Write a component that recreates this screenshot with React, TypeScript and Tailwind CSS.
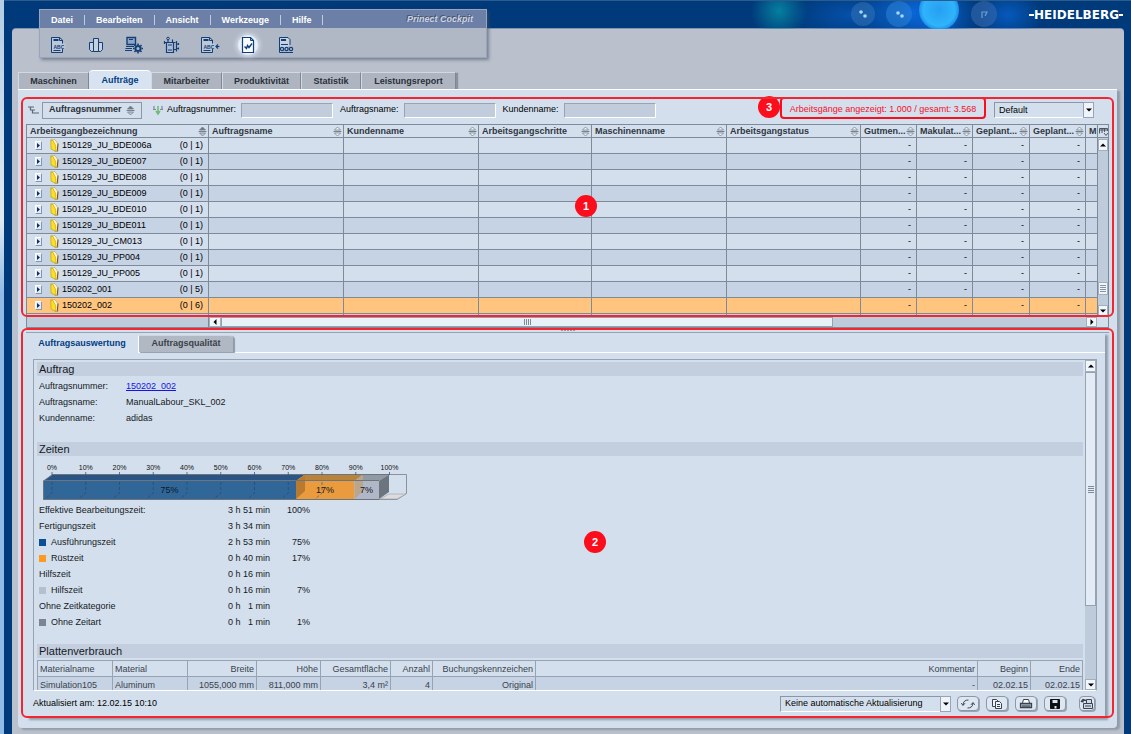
import React from 'react';

type Job = { name: string; count: string; selected?: boolean };

const jobs: Job[] = [
  { name: '150129_JU_BDE006a', count: '(0 | 1)' },
  { name: '150129_JU_BDE007', count: '(0 | 1)' },
  { name: '150129_JU_BDE008', count: '(0 | 1)' },
  { name: '150129_JU_BDE009', count: '(0 | 1)' },
  { name: '150129_JU_BDE010', count: '(0 | 1)' },
  { name: '150129_JU_BDE011', count: '(0 | 1)' },
  { name: '150129_JU_CM013', count: '(0 | 1)' },
  { name: '150129_JU_PP004', count: '(0 | 1)' },
  { name: '150129_JU_PP005', count: '(0 | 1)' },
  { name: '150202_001', count: '(0 | 5)' },
  { name: '150202_002', count: '(0 | 6)', selected: true },
];

const columns = [
  { label: 'Arbeitsgangbezeichnung', width: 'w-[182px]' },
  { label: 'Auftragsname', width: 'w-[135px]' },
  { label: 'Kundenname', width: 'w-[135px]' },
  { label: 'Arbeitsgangschritte', width: 'w-[113px]' },
  { label: 'Maschinenname', width: 'w-[135px]' },
  { label: 'Arbeitsgangstatus', width: '' },
  { label: 'Gutmen...', width: 'w-[56px]' },
  { label: 'Makulat...', width: 'w-[56px]' },
  { label: 'Geplant...', width: 'w-[57px]' },
  { label: 'Geplant...', width: 'w-[56px]' },
  { label: 'M', width: 'w-[12px]' },
];

const times = [
  { label: 'Effektive Bearbeitungszeit:', time: '3 h 51 min', share: '100%', swatch: '' },
  { label: 'Fertigungszeit', time: '3 h 34 min', share: '', swatch: '' },
  { label: 'Ausführungszeit', time: '2 h 53 min', share: '75%', swatch: 'bg-[#0d4f95]' },
  { label: 'Rüstzeit', time: '0 h 40 min', share: '17%', swatch: 'bg-[#ff9a1c]' },
  { label: 'Hilfszeit', time: '0 h 16 min', share: '', swatch: '' },
  { label: 'Hilfszeit', time: '0 h 16 min', share: '7%', swatch: 'bg-[#b6bfcc]' },
  { label: 'Ohne Zeitkategorie', time: '0 h   1 min', share: '', swatch: '' },
  { label: 'Ohne Zeitart', time: '0 h   1 min', share: '1%', swatch: 'bg-[#7c8591]' },
];

const plateColumns = [
  { label: 'Materialname', value: 'Simulation105', width: 'w-[75px]', align: 'text-left' },
  { label: 'Material', value: 'Aluminum', width: 'w-[75px]', align: 'text-left' },
  { label: 'Breite', value: '1055,000 mm', width: 'w-[69px]', align: 'text-right' },
  { label: 'Höhe', value: '811,000 mm', width: 'w-[64px]', align: 'text-right' },
  { label: 'Gesamtfläche', value: '3,4 m²', width: 'w-[70px]', align: 'text-right' },
  { label: 'Anzahl', value: '4', width: 'w-[42px]', align: 'text-right' },
  { label: 'Buchungskennzeichen', value: 'Original', width: 'w-[103px]', align: 'text-right' },
  { label: 'Kommentar', value: '-', width: '', align: 'text-right' },
  { label: 'Beginn', value: '02.02.15', width: 'w-[53px]', align: 'text-right' },
  { label: 'Ende', value: '02.02.15', width: 'w-[52px]', align: 'text-right' },
];

function SortIcon({ active = false }: { active?: boolean }) {
  return (
    <svg className="h-[11px] w-[9px] shrink-0" viewBox="0 0 9 11" fill="none" stroke="#77808d" strokeWidth="0.8">
      <path d="M1.5 4 L4.5 1 L7.5 4 Z" fill={active ? '#6b7481' : '#f2f6fb'} />
      <path d="M0.5 5.5 H8.5" strokeWidth="1" />
      <path d="M1.5 7 L4.5 10 L7.5 7 Z" fill={active ? '#c0c9d5' : '#f2f6fb'} />
    </svg>
  );
}

function Arrow({ dir }: { dir: 'up' | 'down' | 'left' | 'right' }) {
  const d = {
    up: 'M1 5.5 L4 2.5 L7 5.5 Z',
    down: 'M1 2.5 L4 5.5 L7 2.5 Z',
    left: 'M5.5 1 L2.5 4 L5.5 7 Z',
    right: 'M2.5 1 L5.5 4 L2.5 7 Z',
  }[dir];
  return (
    <svg className="h-2 w-2" viewBox="0 0 8 8" fill="#000">
      <path d={d} />
    </svg>
  );
}

function ArrowButton({ dir, className }: { dir: 'up' | 'down' | 'left' | 'right'; className: string }) {
  const name = { up: 'Nach oben', down: 'Nach unten', left: 'Nach links', right: 'Nach rechts' }[dir];
  return (
    <button aria-label={name} className={`flex shrink-0 items-center justify-center border border-[#a3afbf] bg-[#f1f6fb] ${className}`}>
      <Arrow dir={dir} />
    </button>
  );
}

function Badge({ n, className }: { n: number; className: string }) {
  return (
    <span className={`absolute flex size-[22px] items-center justify-center rounded-full bg-[#fb0d1b] text-[11px] font-bold text-white ${className}`}>
      {n}
    </span>
  );
}

/* ---- toolbar drawings, all on a 20 × 18 canvas ---- */
const sheet = (
  <g>
    <path d="M3.5 1.5 H11.5 L14.5 4 V16.5 H3.5 Z" fill="#bcc7d7" />
    <path d="M5.5 4 H10.5" strokeWidth="2" />
    <path d="M11.5 1.5 V4.5 H14.5" />
  </g>
);

const abc = (
  <g>
    <rect x="4.5" y="7.5" width="13" height="5.5" fill="#bcc7d7" stroke="none" />
    <text x="5.5" y="12.5" fontSize="5" fontWeight="700" stroke="none" fill="#123f78">ABC</text>
    <path d="M5.5 14.5 H12.5" />
  </g>
);

const toolIcons: { name: string; lit?: boolean; art: React.ReactNode }[] = [
  { name: 'Auftrag', art: <>{sheet}{abc}</> },
  {
    name: 'Stapel',
    art: (
      <>
        <path d="M3.5 6.5 H7.5 V15.5 H5.5 L3.5 13.5 Z M12.5 6.5 H16.5 V13.5 L14.5 15.5 H12.5 Z" fill="#c7d0de" />
        <path d="M7.5 2.5 H12.5 V15.5 H7.5 Z" fill="#c7d0de" />
      </>
    ),
  },
  {
    name: 'Arbeitsplatz einrichten',
    art: (
      <>
        <path d="M3 1.5 H11.5 V8.5 H3 Z" fill="#8fa6c6" strokeWidth="1.4" />
        <path d="M5 3.5 H9 M2 10.5 H10 M1.5 12.5 H8 M1 14.5 H8" strokeWidth="1.2" />
        <circle cx="14" cy="12.5" r="2.6" strokeWidth="2" />
        <path d="M14 7.5 V9 M14 16 V17.5 M9 12.5 H10.5 M17.5 12.5 H19 M10.5 9 L11.5 10 M16.5 15 L17.5 16 M17.5 9 L16.5 10 M11.5 15 L10.5 16" strokeWidth="1.6" />
      </>
    ),
  },
  {
    name: 'Maschine',
    art: (
      <>
        <circle cx="6" cy="2.5" r="1.3" />
        <path d="M4.5 6.5 H11.5 V16.5 H4.5 Z" fill="#aebdd3" strokeWidth="1.2" />
        <path d="M6 4 V6 M2.5 5 V8 M2.5 6.5 H13.5 M6 9 H10 M6 14 H10 M10.5 3.5 V6 M14.5 5 V15.5 M12 13.5 H14 M15 8 H17 M15 12.5 H17 M16.5 7 V9 M16.5 11.5 V13.5" strokeWidth="1.2" />
      </>
    ),
  },
  {
    name: 'Auftrag laden',
    art: (
      <>
        <g transform="translate(-2 0)">{sheet}{abc}</g>
        <path d="M19.5 10.5 H16 M18 8.5 L16 10.5 L18 12.5" strokeWidth="1.2" />
      </>
    ),
  },
  {
    name: 'Auswertung',
    lit: true,
    art: (
      <>
        <path d="M4.5 1.5 H12.5 L15.5 4.5 V16.5 H4.5 Z" fill="#f8fbff" strokeWidth="1.2" />
        <path d="M12.5 1.5 V4.5 H15.5" />
        <path d="M6.5 10.5 L8.5 12.5 L9.5 9.5 L11 11.5 L14 7.5" strokeWidth="1.4" />
      </>
    ),
  },
  {
    name: 'Einstellungen',
    art: (
      <>
        <path d="M14 9 V3.5 L12 1.5 H3.5 V16.5" fill="#c7d0de" />
        <path d="M5 4 H10" strokeWidth="2" />
        <path d="M5 8.5 H12 M3.5 16.5 H17" />
        <g fill="#c7d0de" strokeWidth="1.3">
          <circle cx="6" cy="13" r="1.6" />
          <circle cx="10.5" cy="13" r="1.6" />
          <circle cx="15" cy="13" r="1.6" />
        </g>
      </>
    ),
  },
];

function HeaderArt() {
  return (
    <svg className="absolute right-0 top-0 h-7 w-[431px]" viewBox="0 0 431 28">
      <defs>
        <radialGradient id="teal"><stop offset="0" stopColor="#067f9f" /><stop offset="1" stopColor="#067f9f" stopOpacity="0" /></radialGradient>
        <radialGradient id="blue"><stop offset="0" stopColor="#0a66d8" /><stop offset="1" stopColor="#0a66d8" stopOpacity="0" /></radialGradient>
        <radialGradient id="orb"><stop offset="0" stopColor="#279ff2" /><stop offset="0.8" stopColor="#2fb4fb" /><stop offset="1" stopColor="#1c8ee8" /></radialGradient>
      </defs>
      <ellipse cx="79" cy="10" rx="28" ry="28" fill="url(#teal)" />
      <ellipse cx="150" cy="14" rx="60" ry="26" fill="url(#blue)" opacity="0.5" />
      <ellipse cx="212" cy="12" rx="52" ry="34" fill="url(#blue)" />
      <ellipse cx="240" cy="14" rx="40" ry="34" fill="url(#blue)" opacity="0.8" />
      <ellipse cx="308" cy="14" rx="34" ry="26" fill="url(#blue)" opacity="0.7" />
      <circle cx="163" cy="13" r="12" fill="#3d7bb8" opacity="0.45" />
      <circle cx="199" cy="13" r="13" fill="#2f86d6" opacity="0.5" />
      <circle cx="239" cy="9" r="20" fill="url(#orb)" />
      <circle cx="284" cy="13" r="13" fill="#3c6cae" opacity="0.55" />
      <g fill="#a9d8f5">
        <circle cx="161" cy="11" r="1.8" /><circle cx="165" cy="15" r="1.8" />
        <circle cx="198" cy="12" r="1.8" /><circle cx="202" cy="15" r="1.8" />
      </g>
      <path d="M282 17 V11 L287 11 L285 15" fill="none" stroke="#7fb0dd" strokeWidth="1.2" opacity="0.8" />
    </svg>
  );
}

function TopMenu() {
  return (
    <div className="relative z-10 -mt-[19px] ml-[27px] w-[448px] border border-[#99a5bd] bg-[#b1b8c5] shadow-[2px_2px_3px_rgba(70,80,100,0.55)]">
      <nav className="flex h-[18px] items-center bg-[#6c7fa7] pt-[2px] text-[9px] font-bold text-white">
        {['Datei', 'Bearbeiten', 'Ansicht', 'Werkzeuge', 'Hilfe'].map((m) => (
          <button key={m} className="flex h-[10px] items-center border-r border-[#c2cbe0] px-[11px] leading-[10px]">{m}</button>
        ))}
        <span className="ml-auto pr-[13px] italic text-[#c9d3e3] [text-shadow:-1px_-1px_0_#4a5568]">Prinect Cockpit</span>
      </nav>
      <div className="flex h-[29px] items-center gap-[18px] pl-2 pt-1">
        {toolIcons.map((t) => (
          <button
            key={t.name}
            aria-label={t.name}
            className={`flex size-5 items-center justify-center ${t.lit ? 'rounded-full bg-[#e6eef8] shadow-[0_0_5px_1px_#dfe8f4]' : ''}`}
          >
            <svg className="h-[18px] w-5" viewBox="0 0 20 18" fill="none" stroke="#123f78" fontFamily="Liberation Sans">{t.art}</svg>
          </button>
        ))}
      </div>
    </div>
  );
}

function MainTabs() {
  const tabs = [
    { label: 'Maschinen', width: 'w-[71px]' },
    { label: 'Aufträge', width: 'w-[62px]', active: true },
    { label: 'Mitarbeiter', width: 'w-[71px]' },
    { label: 'Produktivität', width: 'w-[79px]' },
    { label: 'Statistik', width: 'w-[60px]' },
    { label: 'Leistungsreport', width: 'w-[95px]' },
  ];
  return (
    <div role="tablist" className="mt-3 flex h-[19px] items-end text-[9px] font-bold">
      {tabs.map((t) => (
        <button
          key={t.label}
          role="tab"
          aria-selected={!!t.active}
          className={`${t.width} ${
            t.active
              ? 'h-[19px] rounded-t-sm border-t border-white bg-[#d8e3f1] pt-[2px] text-[#003d82]'
              : 'h-[17px] border-l border-r border-t border-l-[#d3d9e2] border-r-[#7f8794] border-t-[#d3d9e2] bg-[#aeb5c1] pt-px text-[#2b3038] last:shadow-[2px_1px_1px_#8b93a0]'
          }`}
        >
          {t.label}
        </button>
      ))}
    </div>
  );
}

function FilterField({ id, label }: { id: string; label: string }) {
  return (
    <>
      <label htmlFor={id} className="whitespace-nowrap">{label}</label>
      <input id={id} className="ml-[5px] mr-[7px] h-[15px] w-[92px] border border-b-white border-l-[#98a3b3] border-r-white border-t-[#98a3b3] bg-[#c1cddd] px-1" />
    </>
  );
}

function Dropdown({ label, value, width }: { label: string; value: string; width: string }) {
  return (
    <span className={`relative flex h-4 ${width}`}>
      <select aria-label={label} defaultValue={value} className="h-4 w-full appearance-none border border-b-white border-l-[#8b96a6] border-r-white border-t-[#8b96a6] bg-[#d3dfed] pl-1 pr-3 text-[9px] leading-[13px] text-black">
        <option>{value}</option>
      </select>
      <span className="pointer-events-none absolute inset-y-0 right-0 flex w-[11px] items-center justify-center border border-[#98a3b3] bg-[#eef4fa]">
        <Arrow dir="down" />
      </span>
    </span>
  );
}

function FilterBar() {
  return (
    <div className="flex h-[26px] items-center pl-[7px] pr-[20px] text-[9px] text-black">
      <svg className="mr-[3px] h-2 w-[11px]" viewBox="0 0 11 8" fill="none" stroke="#5d6673" strokeWidth="1.2">
        <path d="M0 1 H6 M2.5 1 V4 H7 M4.5 4 V7 H11" />
      </svg>
      <button className="mr-[11px] flex h-[17px] w-[100px] items-center justify-between border border-[#8d97a6] bg-[#d3dfed] pl-[6px] pr-[6px] font-bold text-[#2b3038]">
        Auftragsnummer
        <SortIcon active />
      </button>
      <svg className="mr-1 h-[10px] w-[10px]" viewBox="0 0 10 10" fill="none" strokeWidth="1.2">
        <path d="M1 1 V5 M9 1 V5 M0 4.5 H3 M7 4.5 H10" stroke="#7d8793" />
        <path d="M5 1 V9 M3 6 L5 9 L7 6" stroke="#6fbd7c" strokeWidth="1.6" />
      </svg>
      <FilterField id="f-nummer" label="Auftragsnummer:" />
      <FilterField id="f-name" label="Auftragsname:" />
      <FilterField id="f-kunde" label="Kundenname:" />
      <span className="relative ml-auto mr-2 flex h-[22px] w-[206px] items-center justify-center self-start whitespace-nowrap rounded border-2 border-[#fb0d1b] pt-1 text-[#f3122a]">
        Arbeitsgänge angezeigt: 1.000 / gesamt: 3.568
        <Badge n={3} className="-left-[24px] -top-[3px]" />
      </span>
      <Dropdown label="Ansicht" value="Default" width="w-[100px]" />
    </div>
  );
}

function Folder() {
  return (
    <svg className="ml-2 h-[13px] w-[9px]" viewBox="0 0 9 13">
      <path d="M1 1 L5 0.5 L8 5 V12 L5 12.5 Z" fill="#fdf6c8" stroke="#c09a48" strokeWidth="0.6" />
      <path d="M0.8 0.8 L3 1.6 L5.8 7 V12.5 L1 10 Z" fill="#fbe21f" stroke="#b8901d" strokeWidth="0.6" />
      <path d="M8 4.5 L7.2 12.5" stroke="#6e5230" />
    </svg>
  );
}

function JobTable() {
  return (
    <div className="mx-[5px] mt-px flex h-[193px]">
      <div className="min-w-0 flex-1 overflow-hidden border-l border-[#7f8a99]">
        <table className="w-full table-fixed border-separate border-spacing-0 text-[9px]">
          <thead>
            <tr>
              {columns.map((c, i) => (
                <th key={i} className={`${c.width} h-[14px] overflow-hidden border-b border-r border-t border-[#7f8a99] bg-[#d3dfed] p-0 pl-[3px] text-left font-bold leading-[12px] text-[#30363f]`}>
                  <span className="flex items-center justify-between pr-px">
                    {c.label}
                    {i < 10 && <SortIcon active={i === 0} />}
                  </span>
                </th>
              ))}
            </tr>
          </thead>
          <tbody>
            {jobs.map((j, r) => (
              <tr key={j.name} className={j.selected ? 'bg-[#ffc57f]' : r % 2 ? 'bg-[#c6d3e4]' : 'bg-[#d4dfee]'}>
                <td className="h-4 border-b border-r border-[#7f8a99] p-0">
                  <span className="flex items-center pr-[5px] leading-[15px]">
                    <button aria-label={`${j.name} öffnen`} className="ml-2 flex h-[9px] w-[7px] items-center justify-center border border-b-[#8896a8] border-l-white border-r-[#8896a8] border-t-white bg-[#e3ecf6]">
                      <svg className="h-[5px] w-[3px]" viewBox="0 0 3 5" fill="#0b3263"><path d="M0 0 L3 2.5 L0 5 Z" /></svg>
                    </button>
                    <Folder />
                    <span className="ml-[3px]">{j.name}</span>
                    <span className="ml-auto">{j.count}</span>
                  </span>
                </td>
                {columns.slice(1).map((_, i) => (
                  <td key={i} className="h-4 border-b border-r border-[#7f8a99] p-0 pr-[5px] text-right leading-[15px]">
                    {i >= 5 && i < 9 ? '-' : ''}
                  </td>
                ))}
              </tr>
            ))}
            <tr className="bg-[#c6d3e4]">
              <td className="h-4 border-r border-[#7f8a99] p-0">
                <span className="ml-[15px] flex"><Folder /></span>
              </td>
              {columns.slice(1).map((_, i) => (
                <td key={i} className="border-r border-[#7f8a99] p-0" />
              ))}
            </tr>
          </tbody>
        </table>
      </div>
      <div className="flex w-[11px] flex-col border-r border-[#7f8a99] bg-[#becbdb]">
        <button aria-label="Spalten wählen" className="flex h-[14px] items-center justify-center border-y border-[#7f8a99] bg-[#d3dfed]">
          <svg className="h-[9px] w-[9px]" viewBox="0 0 9 9" fill="none" stroke="#4d5663"><path d="M0.5 6.5 V1.5 H8.5 V4 M0.5 3 H8.5 M3 1.5 V6 M5.5 1.5 V5 M5 6 L7 8.5 L9 6" /></svg>
        </button>
        <ArrowButton dir="up" className="mt-px h-[12px]" />
        <div className="flex-1" />
        <div className="flex h-[13px] flex-col items-center justify-center gap-px border border-[#a3afbf] bg-[#eef4fa]">
          <i className="h-px w-[6px] bg-[#8793a3]" />
          <i className="h-px w-[6px] bg-[#8793a3]" />
          <i className="h-px w-[6px] bg-[#8793a3]" />
          <i className="h-px w-[6px] bg-[#8793a3]" />
        </div>
        <div className="h-[10px]" />
        <ArrowButton dir="down" className="h-[12px]" />
      </div>
    </div>
  );
}

function HorizontalScroll() {
  return (
    <div className="mx-[5px] flex h-[11px] border-x border-b border-[#7f8a99] bg-[#becbdb]">
      <div className="w-[182px] border-r border-[#7f8a99]" />
      <ArrowButton dir="left" className="w-[12px]" />
      <div className="flex w-[612px] items-center justify-center gap-px border border-[#97a2b1] bg-[#e8f0f8]">
        <i className="h-[6px] w-px bg-[#7f8a99]" />
        <i className="h-[6px] w-px bg-[#7f8a99]" />
        <i className="h-[6px] w-px bg-[#7f8a99]" />
        <i className="h-[6px] w-px bg-[#7f8a99]" />
      </div>
      <div className="flex-1" />
      <ArrowButton dir="right" className="w-[11px]" />
      <div className="w-[11px] bg-[#d4dfee]" />
    </div>
  );
}

function SectionTitle({ children, className = '' }: { children: React.ReactNode; className?: string }) {
  return <h2 className={`h-[14px] bg-[#c3cfdf] pl-[2px] text-[11px] leading-[14px] text-[#16191e] ${className}`}>{children}</h2>;
}

function TimeChart() {
  const ticks = [0, 10, 20, 30, 40, 50, 60, 70, 80, 90, 100];
  const step = 33.75;
  return (
    <svg className="block h-[46px] w-[372px]" viewBox="37 456 372 46" fontFamily="Liberation Sans" textAnchor="middle">
      {ticks.map((t, i) => (
        <text key={t} x={52 + i * step} y="469.5" fontSize="7" fill="#111">{t}%</text>
      ))}
      <path d="M43 499.5 H397 L406.5 493.5 V474.5 H52" fill="none" stroke="#8b929c" />
      <path d="M380 499 H397 L406 494 H389 Z" fill="#dcdcdc" stroke="#9aa0a8" strokeWidth="0.6" />
      <path d="M43.5 481 L52.5 474.5 H305 L296 481 Z" fill="#2a5484" />
      <path d="M296 481 L305 474.5 H363 L354.5 481 Z" fill="#b8843c" />
      <path d="M354.5 481 L363 474.5 H389 L379 481 Z" fill="#8f9aa5" />
      <path d="M43.5 481 H296 V499 H43.5 Z" fill="#316698" />
      <path d="M296 481 H354.5 V499 H296 Z" fill="#e99b3d" />
      <path d="M296 481 L305 475 V491 L296 499 Z" fill="#b97a30" />
      <path d="M354.5 481 H379 V499 H354.5 Z" fill="#b1b7c6" />
      <path d="M354.5 481 L363 475 V491 L354.5 499 Z" fill="#b9a68c" />
      <path d="M379 481 L389 474.5 V492 L379 499 Z" fill="#6c747e" />
      <path d="M43.5 480.5 H379 M43.5 481 L52.5 474.5 H389 M43.5 481 V499.5 H379" fill="none" stroke="#6c747e" />
      {ticks.map((t, i) => (
        <g key={t} stroke="#3f5570" strokeWidth="0.8" fill="none">
          <path d={`M${52 + i * step} 472 V475`} />
          {i < 9 && <path d={`M${52 + i * step} 482 V493 L${45 + i * step} 499`} strokeDasharray="3 2" stroke="#1c3c60" opacity="0.6" />}
        </g>
      ))}
      <g fontSize="9" fill="#0c1828">
        <text x="169.5" y="493">75%</text>
        <text x="325" y="493">17%</text>
        <text x="366.5" y="493">7%</text>
      </g>
    </svg>
  );
}

function Details() {
  return (
    <div className="min-w-0 flex-1 overflow-hidden pl-[3px] pr-[2px] pt-[2px]">
      <SectionTitle>Auftrag</SectionTitle>
      <dl className="mt-[2px] grid grid-cols-[87px_1fr] pl-[2px] leading-4">
        <dt>Auftragsnummer:</dt>
        <dd><a href="#150202_002" className="text-[#1414e6] underline">150202_002</a></dd>
        <dt>Auftragsname:</dt>
        <dd>ManualLabour_SKL_002</dd>
        <dt>Kundenname:</dt>
        <dd>adidas</dd>
      </dl>

      <SectionTitle className="mt-4">Zeiten</SectionTitle>
      <TimeChart />
      <table className="ml-[2px] table-fixed border-separate border-spacing-0 leading-4">
        <tbody>
          {times.map((t, i) => (
            <tr key={i}>
              <td className="w-[160px] p-0">
                <span className="flex items-center">
                  {t.swatch && <i className={`mr-[5px] size-[7px] ${t.swatch}`} />}
                  {t.label}
                </span>
              </td>
              <td className="w-[71px] whitespace-pre p-0 text-right">{t.time}</td>
              <td className="w-[40px] p-0 text-right">{t.share}</td>
            </tr>
          ))}
        </tbody>
      </table>

      <SectionTitle className="mt-[14px]">Plattenverbrauch</SectionTitle>
      <table className="mt-[2px] w-full table-fixed border-separate border-spacing-0 border-l border-t border-[#98a3b2] text-[#3a424d]">
        <thead>
          <tr>
            {plateColumns.map((c) => (
              <th key={c.label} className={`h-4 border-b border-r border-[#98a3b2] p-0 px-[2px] font-normal leading-[14px] ${c.width} ${c.align}`}>{c.label}</th>
            ))}
          </tr>
        </thead>
        <tbody>
          <tr className="bg-[#c6d3e4]">
            {plateColumns.map((c) => (
              <td key={c.label} className={`h-4 border-b border-r border-[#98a3b2] p-0 px-[2px] leading-[14px] ${c.align}`}>{c.value}</td>
            ))}
          </tr>
        </tbody>
      </table>
    </div>
  );
}

function FooterButton({ name, className = '', children }: { name: string; className?: string; children: React.ReactNode }) {
  return (
    <button aria-label={name} className={`flex h-[15px] items-center justify-center rounded-sm border border-[#8d97a6] bg-[#dde7f2] shadow-[1px_1px_0_#9aa5b4] ${className}`}>
      <svg className="h-3 w-[14px] shrink-0" viewBox="0 0 14 12" fill="none" stroke="#3b4350">{children}</svg>
    </button>
  );
}

function Footer() {
  return (
    <div className="flex h-[27px] items-center pb-[2px] pr-[2px] text-black">
      <span>Aktualisiert am: 12.02.15 10:10</span>
      <span className="ml-auto mr-[6px]">
        <Dropdown label="Automatische Aktualisierung" value="Keine automatische Aktualisierung" width="w-[171px]" />
      </span>
      <div className="flex gap-[7px]">
        <FooterButton name="Aktualisieren" className="w-[22px]">
          <path d="M2 7 C2 3.5 4.5 1.8 7.5 2 M12 5 C12 8.5 9.5 10.2 6.5 10" />
          <path d="M0.3 5.2 L2 7.5 L4 5.2 M10 6.8 L12 4.5 L13.7 6.8" />
        </FooterButton>
        <FooterButton name="Kopieren" className="w-[22px]">
          <path d="M2.5 1.5 H6.5 L8.5 3.5 V8.5 H2.5 Z" fill="#eef4fa" />
          <path d="M5.5 3.5 H9.5 L11.5 5.5 V10.5 H5.5 Z M7 6.5 H10 M7 8.5 H10" fill="#eef4fa" />
        </FooterButton>
        <FooterButton name="Drucken" className="w-[22px]">
          <path d="M3.5 5 L4.5 1.5 H9.5 L10.5 5" fill="#fff" />
          <path d="M1.5 5.5 H12.5 V9.5 H1.5 Z" fill="#a9b2bf" strokeWidth="1.3" />
          <path d="M3 8 H11" />
        </FooterButton>
        <FooterButton name="Speichern" className="w-[22px]">
          <path d="M2.5 1.5 H11.5 V10.5 H2.5 Z" fill="#0c0f14" stroke="#0c0f14" />
          <path d="M4.5 2 H9.5 V5 H4.5 Z M6.5 8 H8.5 V10.5 H6.5 Z" fill="#dde7f2" stroke="none" />
        </FooterButton>
      </div>
      <FooterButton name="Druckerwarteschlange" className="ml-[13px] w-[16px]">
        <path d="M1 4 L3 1.5 L6 2.5 M3 1.5 V4.5" strokeWidth="1.4" />
        <path d="M6.5 5 V1.5 H11.5 V5 M3.5 5.5 H12.5 V10.5 H3.5 Z M5 8 H11" fill="#cfd9e5" />
      </FooterButton>
    </div>
  );
}

function DetailPane() {
  return (
    <section className="relative flex min-h-0 flex-1 flex-col px-[5px]">
      <div className="flex h-[5px] items-center justify-center gap-px border-b border-[#98a3b2]">
        <i className="size-[2px] bg-[#8d97a6]" />
        <i className="size-[2px] bg-[#8d97a6]" />
        <i className="size-[2px] bg-[#8d97a6]" />
        <i className="size-[2px] bg-[#8d97a6]" />
        <i className="size-[2px] bg-[#8d97a6]" />
      </div>
      <div className="mr-[4px] flex min-h-0 flex-1 flex-col text-[9px] text-[#16191e] shadow-[3px_2px_2px_#929dac]">
        <div role="tablist" className="flex h-[20px] bg-[#d3dfed] font-bold">
          <button role="tab" aria-selected="true" className="w-[112px] pt-[2px] text-[#003d82]">Auftragsauswertung</button>
          <div className="flex flex-1 border-b border-white pt-[2px]">
            <button role="tab" aria-selected="false" className="h-[17px] w-[95px] rounded-tr border-l border-t border-l-white border-t-[#cfd6e0] bg-[#b0b8c4] text-[#3b4149] shadow-[2px_1px_1px_#8f99a7]">Auftragsqualität</button>
          </div>
        </div>
        <div className="flex min-h-0 flex-1 flex-col bg-[#d3dfed] pl-[7px] pr-[8px] pt-[6px]">
          <div className="flex min-h-0 flex-1 border border-b-white border-l-[#98a3b2] border-r-[#98a3b2] border-t-[#98a3b2]">
            <Details />
            <div className="flex w-[11px] flex-col bg-[#becbdb]">
              <ArrowButton dir="up" className="h-[12px]" />
              <div className="flex basis-[234px] flex-col items-center justify-center gap-px border border-[#97a2b1] bg-[#e3ecf6]">
                <i className="h-px w-[6px] bg-[#7f8a99]" />
                <i className="h-px w-[6px] bg-[#7f8a99]" />
                <i className="h-px w-[6px] bg-[#7f8a99]" />
                <i className="h-px w-[6px] bg-[#7f8a99]" />
              </div>
              <div className="flex-1" />
              <ArrowButton dir="down" className="h-[11px]" />
            </div>
          </div>
          <Footer />
        </div>
      </div>
      <div className="pointer-events-none absolute inset-0 rounded-md border-2 border-[#f5252f]" />
      <Badge n={2} className="left-[563px] top-[203px]" />
    </section>
  );
}

export default function App() {
  return (
    <div className="flex h-screen min-h-[600px] w-full font-['Liberation_Sans',Arial,sans-serif]">
      <div className="w-1 shrink-0 bg-gradient-to-b from-[#b4cde4] via-[#dfe9f2] via-30% to-[#8fbbe6] to-40%" />
      <div className="flex min-w-0 flex-1 flex-col bg-[#003a7b]">
        <header className="relative flex h-7 shrink-0 items-center justify-end border-t border-[#2c5c8c] pr-[8px]">
          <HeaderArt />
          <div className="relative flex items-center font-['DejaVu_Sans',sans-serif] text-[12px] font-bold text-white">
            <i className="h-[2px] w-[5px] bg-white" />
            HEIDELBERG
            <i className="h-[2px] w-1 bg-white" />
          </div>
        </header>
        <div className="ml-2 mr-[7px] flex min-h-0 flex-1 flex-col rounded-t border-t border-[#7f93b3] bg-[#bac0cc] pb-[6px] pl-[6px] pr-[7px]">
          <div className="-ml-[6px] -mt-px"><TopMenu /></div>
          <MainTabs />
          <main className="flex min-h-0 flex-1 flex-col rounded-b border-t border-white bg-[#d3dfed] px-[3px] pb-[10px] pt-[7px] shadow-[3px_2px_2px_#929ba9]">
            <section className="relative">
              <FilterBar />
              <JobTable />
              <HorizontalScroll />
              <div className="pointer-events-none absolute inset-x-0 bottom-[11px] top-0 rounded-md border-2 border-[#f5252f]" />
              <Badge n={1} className="left-[554px] top-[98px]" />
            </section>
            <DetailPane />
          </main>
        </div>
      </div>
    </div>
  );
}
